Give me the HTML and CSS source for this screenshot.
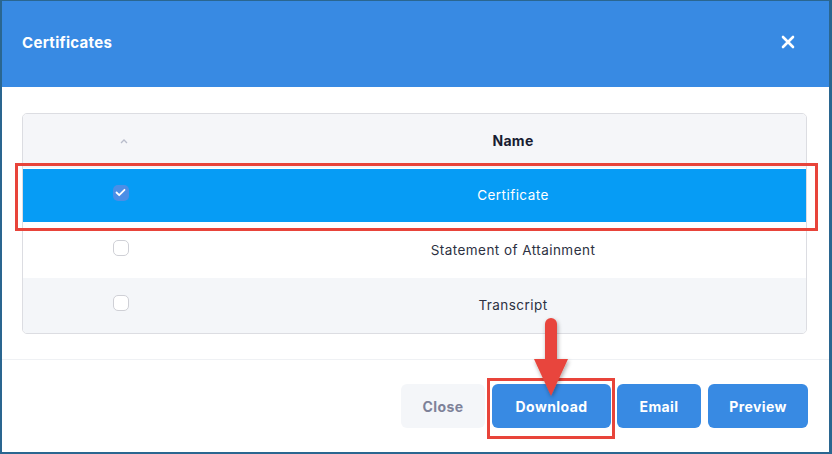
FILE: index.html
```html
<!DOCTYPE html>
<html>
<head>
<meta charset="utf-8">
<link rel="stylesheet" href="styles.css">
</head>
<body>
<div class="frame">
  <div class="modal-header">
    <h2 class="title">Certificates</h2>
    <svg class="close-x" width="14" height="14" viewBox="0 0 14 14"><path d="M2 2L12 12M12 2L2 12" stroke="#fff" stroke-width="2.6" stroke-linecap="round"/></svg>
  </div>
  <div class="modal-body">
    <div class="table">
      <div class="row head">
        <div class="cell check"><svg class="chev" width="8" height="5" viewBox="0 0 8 5"><path d="M1 4L4 1L7 4" fill="none" stroke="#b8bccb" stroke-width="1.3"/></svg></div>
        <div class="cell name bold">Name</div>
      </div>
      <div class="row selected">
        <div class="cell check"><span class="box checked"><svg width="11" height="9" viewBox="0 0 11 9"><path d="M1.5 4.5L4.2 7.2L9.5 1.8" fill="none" stroke="#fff" stroke-width="1.8" stroke-linecap="round" stroke-linejoin="round"/></svg></span></div>
        <div class="cell name">Certificate</div>
      </div>
      <div class="row">
        <div class="cell check"><span class="box"></span></div>
        <div class="cell name">Statement of Attainment</div>
      </div>
      <div class="row alt">
        <div class="cell check"><span class="box"></span></div>
        <div class="cell name">Transcript</div>
      </div>
    </div>
  </div>
  <div class="modal-footer">
    <button class="btn light">Close</button>
    <button class="btn primary">Download</button>
    <button class="btn primary">Email</button>
    <button class="btn primary">Preview</button>
  </div>
  <div class="mark mark-row"></div>
  <div class="mark mark-btn"></div>
  <svg class="arrow" width="50" height="90" viewBox="0 0 50 90">
    <defs><filter id="sh" x="-50%" y="-50%" width="200%" height="200%"><feDropShadow dx="1" dy="2" stdDeviation="2" flood-color="#000" flood-opacity="0.35"/></filter></defs>
    <g filter="url(#sh)">
      <path d="M19 8a6 6 0 0 1 12 0V45h-12Z" fill="#e8453c"/>
      <path d="M8 43H42L25 80Z" fill="#e8453c"/>
    </g>
  </svg>
</div>
</body>
</html>
```

FILE: styles.css
```css
* { box-sizing: border-box; }
html, body { margin: 0; padding: 0; }
body {
  width: 832px;
  height: 454px;
  font-family: "Inter", "Open Sans", "DejaVu Sans", sans-serif;
  background: #fff;
}
.frame {
  position: relative;
  width: 832px;
  height: 454px;
  border-style: solid;
  border-color: #2a6690;
  border-width: 1px 3px 2px 2px;
  display: flex;
  flex-direction: column;
  background: #fff;
}
.modal-header {
  height: 86px;
  background: #388ae3;
  display: flex;
  align-items: center;
  justify-content: space-between;
  padding: 0 34px 4px 20px;
}
.title {
  margin: 0;
  color: #fff;
  font-size: 15px;
  font-weight: 700;
  letter-spacing: 0.3px;
}
.close-x { display: block; }
.modal-body {
  padding: 26px 22px 25px 20px;
  border-bottom: 1px solid #eff1f4;
}
.table {
  border: 1px solid #dcdde2;
  border-radius: 5px;
  overflow: hidden;
  background: #fff;
}
.row {
  display: flex;
  height: 55px;
  align-items: center;
  font-size: 13.5px;
  letter-spacing: 0.45px;
  color: #2d3142;
}
.row.head { background: #f5f6f9; height: 54px; }
.row.selected { background: #069cf5; color: #fff; border-top: 1px solid #fff; border-bottom: 1px solid #fff; }
.row.alt { background: #f4f6f9; }
.cell.check {
  width: 197px;
  display: flex;
  justify-content: center;
  padding-right: 2px;
  margin-top: -6px;
}
.row.head .cell.check { margin-top: 0; padding-left: 5px; padding-right: 0; }
.cell.name {
  flex: 1;
  text-align: center;
  padding-bottom: 2px;
}
.bold { font-weight: 700; font-size: 14px; color: #181c32; letter-spacing: 0.3px; }
.box {
  width: 16px;
  height: 16px;
  border: 1.5px solid #cfd0d6;
  border-radius: 5px;
  background: #fff;
  display: flex;
  align-items: center;
  justify-content: center;
}
.box.checked { background: #4b8ee6; border: none; }
.modal-footer {
  flex: 1;
  display: flex;
  justify-content: flex-end;
  align-items: flex-start;
  gap: 7px;
  padding: 24px 21px 0 0;
}
.btn {
  height: 44px;
  border: none;
  border-radius: 6px;
  font-family: inherit;
  font-size: 14px;
  font-weight: 700;
  letter-spacing: 0.4px;
  padding: 0;
}
.btn.light { background: #f4f6f9; color: #7e8299; width: 84px; }
.btn.primary { background: #388ae3; color: #fff; }
.btn.primary:nth-child(2) { width: 119px; }
.btn.primary:nth-child(3) { width: 84px; margin-left: -1px; }
.btn.primary:nth-child(4) { width: 100px; }
.mark {
  position: absolute;
  border: 3px solid #e8443a;
}
.mark-row { left: 13px; top: 162px; width: 803px; height: 68px; }
.mark-btn { left: 485px; top: 377px; width: 128px; height: 61px; }
.arrow { position: absolute; left: 524px; top: 315px; }
```
